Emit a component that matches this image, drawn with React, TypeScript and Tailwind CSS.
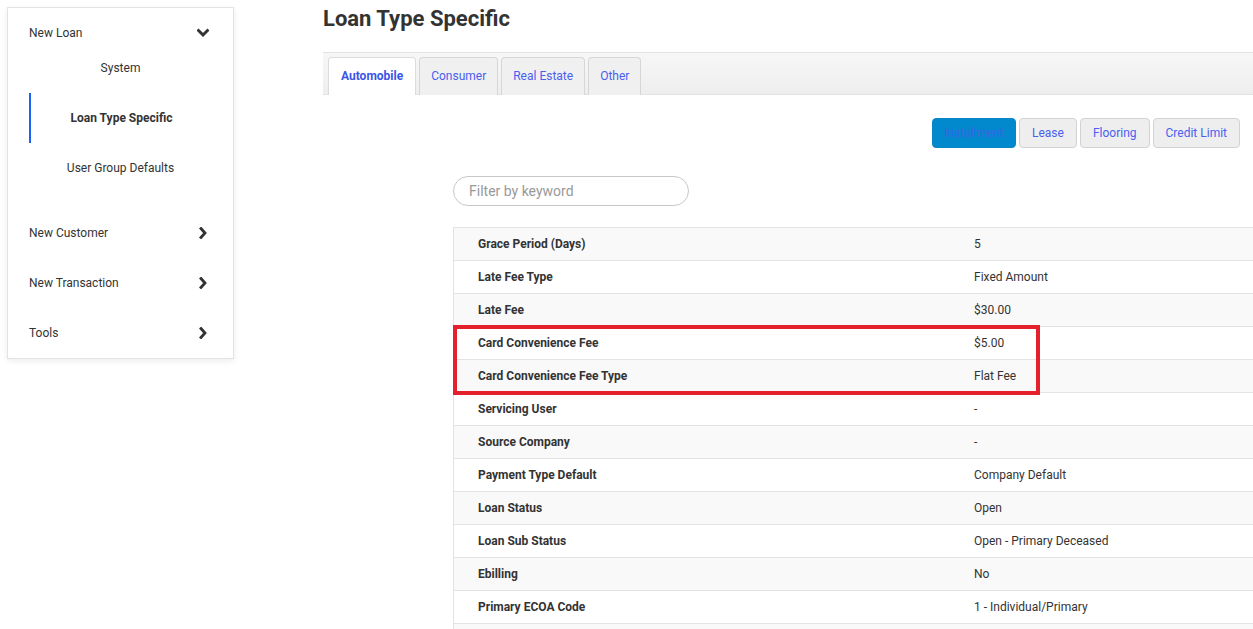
import React from 'react';

const ROWS: [string, string][] = [
  ['Grace Period (Days)', '5'],
  ['Late Fee Type', 'Fixed Amount'],
  ['Late Fee', '$30.00'],
  ['Card Convenience Fee', '$5.00'],
  ['Card Convenience Fee Type', 'Flat Fee'],
  ['Servicing User', '-'],
  ['Source Company', '-'],
  ['Payment Type Default', 'Company Default'],
  ['Loan Status', 'Open'],
  ['Loan Sub Status', 'Open - Primary Deceased'],
  ['Ebilling', 'No'],
  ['Primary ECOA Code', '1 - Individual/Primary'],
  ['', ''],
];

const ChevronDown = () => (
  <svg width="12" height="10" viewBox="0 0 12 10" className="text-[#333]">
    <polyline points="1.5,2.5 6,7 10.5,2.5" fill="none" stroke="currentColor" strokeWidth="3" strokeLinecap="square" />
  </svg>
);

const ChevronRight = () => (
  <svg width="8" height="12" viewBox="0 0 8 12" className="text-[#333]">
    <polyline points="2,1.5 6,6 2,10.5" fill="none" stroke="currentColor" strokeWidth="2.8" strokeLinecap="square" />
  </svg>
);

export default function App() {
  return (
    <div className="h-[629px] w-[1253px] overflow-hidden bg-white font-['Roboto',sans-serif] text-[12px] text-[#333]">
      <div className="flex">
        {/* Sidebar */}
        <div className="pl-[7px] pt-[7px]">
          <div className="w-[227px] h-[352px] bg-white border border-[#e3e3e3] shadow-[0_2px_6px_rgba(0,0,0,0.08)]">
            <div className="flex h-[50px] items-center justify-between pl-[21px] pr-[24px]">
              <span>New Loan</span>
              <ChevronDown />
            </div>
            <div className="flex h-[20px] items-center justify-center">System</div>
            <div className="mt-[15px] ml-[21px] flex h-[50px] items-center justify-center border-l-2 border-[#1a62f5] pr-[21px] font-bold">
              Loan Type Specific
            </div>
            <div className="flex h-[50px] items-center justify-center">User Group Defaults</div>
            <div className="mt-[15px] flex h-[50px] items-center justify-between pl-[21px] pr-[26px]">
              <span>New Customer</span>
              <ChevronRight />
            </div>
            <div className="flex h-[50px] items-center justify-between pl-[21px] pr-[26px]">
              <span>New Transaction</span>
              <ChevronRight />
            </div>
            <div className="flex h-[50px] items-center justify-between pl-[21px] pr-[26px]">
              <span>Tools</span>
              <ChevronRight />
            </div>
          </div>
        </div>

        {/* Main */}
        <div className="ml-[89px] flex-1">
          <h1 className="mt-[5px] h-[28px] text-[22px] font-bold leading-[28px] text-[#333]">Loan Type Specific</h1>

          <div className="mt-[19px] flex h-[43px] items-end gap-[3px] border-t border-b border-[#e2e2e2] bg-gradient-to-b from-[#f7f7f7] to-[#eeeeee] pl-[5px]">
            {['Automobile', 'Consumer', 'Real Estate', 'Other'].map((t, i) => (
              <div
                key={t}
                className={`-mb-px flex h-[38px] items-center rounded-t-[4px] border border-b-0 pb-px ${
                  i === 0
                    ? 'border-[#dcdcdc] bg-white px-[12px] font-bold text-[#3b55e6]'
                    : 'border-[#d6d6d6] bg-[#f0f0f0] px-[11px] text-[#4a5ef0]'
                }`}
              >
                {t}
              </div>
            ))}
          </div>

          <div className="mt-[23px] flex justify-end gap-[3px] pr-[13px]">
            <div className="flex h-[30px] items-center rounded-[4px] border border-[#0a86c7] bg-[#0288cc] px-[11px] text-[#3866e6]">
              Installment
            </div>
            {['Lease', 'Flooring', 'Credit Limit'].map(b => (
              <div
                key={b}
                className="flex h-[30px] items-center rounded-[4px] border border-[#d2d2d2] bg-[#eeeeee] px-[12px] text-[#4a5ef0]"
              >
                {b}
              </div>
            ))}
          </div>

          <div className="ml-[130px] mt-[28px] flex h-[30px] w-[236px] items-center rounded-full border border-[#c8c8c8] pl-[15px] text-[14px] text-[#999]">
            Filter by keyword
          </div>

          <div className="relative ml-[130px] mt-[21px] border-l border-t border-[#e3e3e3]">
            {ROWS.map(([label, value], i) => (
              <div
                key={i}
                className={`flex h-[33px] items-center border-b border-[#e3e3e3] ${i % 2 === 0 ? 'bg-[#f9f9f9]' : 'bg-white'}`}
              >
                <div className="w-[520px] pl-[24px] font-bold text-[#333]">{label}</div>
                <div className="text-[#333]">{value}</div>
              </div>
            ))}
            <div className="pointer-events-none absolute left-[-1px] top-[97px] h-[70px] w-[587px] border-[4px] border-[#e3202b]" />
          </div>
        </div>
      </div>
    </div>
  );
}
